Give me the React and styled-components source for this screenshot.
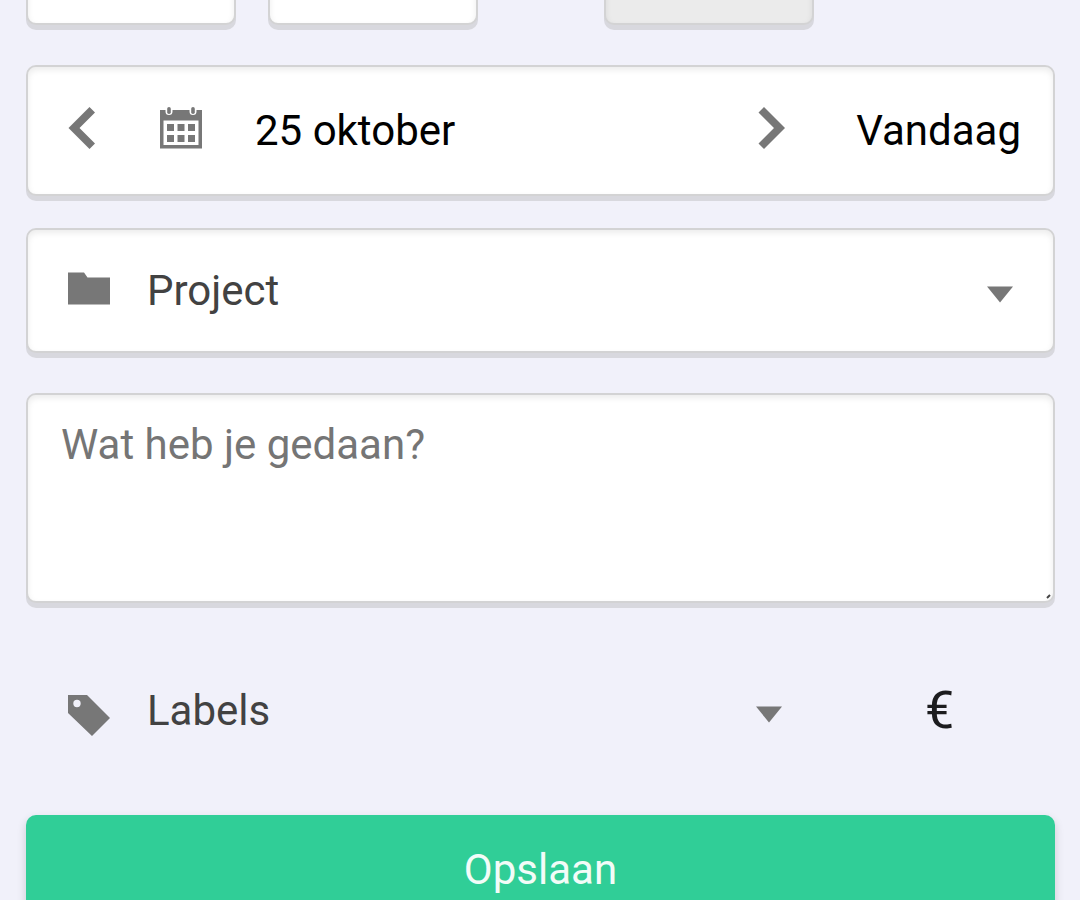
import styled, { createGlobalStyle, css } from "styled-components";

const GlobalStyle = createGlobalStyle`
  *,
  *::before,
  *::after {
    box-sizing: border-box;
  }

  body {
    margin: 0;
    background-color: #f1f1fa;
    color: #000000;
    font-family: Roboto, "Liberation Sans", sans-serif;
    font-size: 42px;
    line-height: 50px;
  }

  input,
  select,
  textarea,
  button {
    margin: 0;
    padding: 0;
    border: none;
    border-radius: 0;
    outline: none;
    background-color: transparent;
    color: inherit;
    font: inherit;
  }

  button {
    cursor: pointer;
  }
`;

const panel = css`
  border: 2px solid #d3d3d4;
  border-radius: 10px;
  background-color: #ffffff;
  box-shadow:
    0 5px 0 #d8d8de,
    inset 0 3px 6px rgba(0, 0, 0, 0.08);
`;

const Form = styled.form`
  display: flex;
  flex-direction: column;
  height: 100vh;
  padding: 0 25px 0 26px;
  overflow: hidden;

  & > * {
    flex-shrink: 0;
  }
`;

/* scrolled partly out of view */
const TimeRow = styled.div`
  display: grid;
  grid-template-columns: 210fr 210fr 62fr 210fr 209fr;
  gap: 32px;
  margin-top: -100px;
  margin-bottom: 40px;
`;

const TimeInput = styled.input`
  && {
    ${panel}
    width: 100%;
    height: 125px;
    text-align: center;
    background-color: ${(props) => (props.$total ? "#ebebeb" : "#ffffff")};
  }
  grid-column: ${(props) => (props.$total ? 4 : "auto")};
`;

const DateRow = styled.div`
  ${panel}
  display: flex;
  align-items: center;
  height: 131px;
  padding: 0 32px 0 40px;
  margin-bottom: 32px;
`;

const ArrowButton = styled.button`
  display: flex;
  flex-shrink: 0;
`;

const DateLabel = styled.label`
  display: flex;
  align-items: center;
  flex: 1;
  min-width: 0;
  gap: 53px;
  padding: 0 40px 0 65px;
`;

const DateInput = styled.input`
  flex: 1;
  min-width: 0;
`;

const TodayButton = styled.button`
  flex-shrink: 0;
  margin-left: 71px;
`;

const SelectRow = styled.div`
  display: flex;
  align-items: center;
  flex: 1;
  gap: 37px;
  padding: 0 40px;
`;

const ProjectRow = styled(SelectRow)`
  ${panel}
  flex: none;
  height: 125px;
  margin-bottom: 40px;
`;

const Select = styled.select`
  appearance: none;
  flex: 1;
  min-width: 0;
  && {
    color: #424242;
  }
`;

const NoteBox = styled.div`
  position: relative;
  display: flex;
`;

const Note = styled.textarea`
  && {
    ${panel}
    width: 100%;
    height: 210px;
    padding: 25px 33px;
    resize: none;
  }

  &::placeholder {
    color: #757575;
  }
`;

const Grip = styled.svg`
  position: absolute;
  right: 4px;
  bottom: 4px;
`;

const LabelRow = styled.div`
  display: flex;
  align-items: center;
  height: 212px;
  padding-top: 4px;

  ${SelectRow} {
    padding: 0 42px;
  }
`;

const EuroButton = styled.button`
  width: 231px;
  && {
    color: #1c1c1e;
    font-family: Roboto, "Liberation Sans", sans-serif;
    font-size: 52px;
  }
`;

const SaveButton = styled.button`
  height: 109px;
  && {
    border-radius: 10px;
    background-color: #30ce97;
    color: #f2fcf8;
    box-shadow: 0 4px 10px rgba(0, 0, 0, 0.16);
  }
`;

const Icon = styled.svg`
  display: block;
  flex-shrink: 0;
  fill: #777777;
`;

function Chevron({ next }) {
  return (
    <Icon width="27" height="52" viewBox="0 0 27 52" aria-hidden="true">
      <path
        d={
          next
            ? "M6 2 27 23 6 44 0.5 38.5 16 23 0.5 7.5Z"
            : "M21.5 2 0.5 23 21.5 44 27 38.5 11.5 23 27 7.5Z"
        }
      />
    </Icon>
  );
}

function CalendarIcon() {
  return (
    <Icon width="42" height="52" viewBox="0 0 42 52" aria-hidden="true">
      <path
        fillRule="evenodd"
        d="M0 5H5.5V6.5A3.5 3.5 0 0 0 12.5 6.5V5H29.5V6.5A3.5 3.5 0 0 0 36.5 6.5V5H42V43.5H0ZM3.5 15.5V40H38.5V15.5Z"
      />
      <rect x="7.2" y="2" width="3.6" height="7" rx="1.8" />
      <rect x="31.2" y="2" width="3.6" height="7" rx="1.8" />
      <path d="M7 19h7v7H7zM17.5 19h7v7h-7zM28 19h7v7h-7zM7 30h7v7H7zM17.5 30h7v7h-7zM28 30h7v7h-7z" />
    </Icon>
  );
}

function FolderIcon() {
  return (
    <Icon width="42" height="52" viewBox="0 0 42 52" aria-hidden="true">
      <path d="M0 7.5H16L19.5 12.5H42V39.5H0Z" />
    </Icon>
  );
}

function TagIcon() {
  return (
    <Icon width="42" height="52" viewBox="0 0 42 52" aria-hidden="true">
      <path
        fillRule="evenodd"
        d="M0 10H19L42 33 24 51 0 28ZM9 14.8A3.7 3.7 0 1 0 9 22.2 3.7 3.7 0 1 0 9 14.8Z"
      />
    </Icon>
  );
}

function Caret() {
  return (
    <Icon width="26" height="24" viewBox="0 0 26 24" aria-hidden="true">
      <path d="M0 7.5H26L13 23.5Z" />
    </Icon>
  );
}

function App() {
  return (
    <>
      <GlobalStyle />
      <Form onSubmit={(e) => e.preventDefault()}>
        <TimeRow>
          <TimeInput type="text" aria-label="Van" />
          <TimeInput type="text" aria-label="Tot" />
          <TimeInput type="text" aria-label="Totaal" $total readOnly />
        </TimeRow>

        <DateRow>
          <ArrowButton type="button" aria-label="Vorige dag">
            <Chevron />
          </ArrowButton>
          <DateLabel>
            <CalendarIcon />
            <DateInput type="text" aria-label="Datum" defaultValue="25 oktober" />
          </DateLabel>
          <ArrowButton type="button" aria-label="Volgende dag">
            <Chevron next />
          </ArrowButton>
          <TodayButton type="button">Vandaag</TodayButton>
        </DateRow>

        <ProjectRow>
          <FolderIcon />
          <Select aria-label="Project">
            <option>Project</option>
          </Select>
          <Caret />
        </ProjectRow>

        <NoteBox>
          <Note aria-label="Omschrijving" placeholder="Wat heb je gedaan?" />
          <Grip width="5" height="5" viewBox="0 0 5 5" aria-hidden="true">
            <path d="M1 4 4 1" stroke="#444444" strokeWidth="2" />
          </Grip>
        </NoteBox>

        <LabelRow>
          <SelectRow>
            <TagIcon />
            <Select aria-label="Labels">
              <option>Labels</option>
            </Select>
            <Caret />
          </SelectRow>
          <EuroButton type="button">€</EuroButton>
        </LabelRow>

        <SaveButton type="submit">Opslaan</SaveButton>
      </Form>
    </>
  );
}

export default App;
